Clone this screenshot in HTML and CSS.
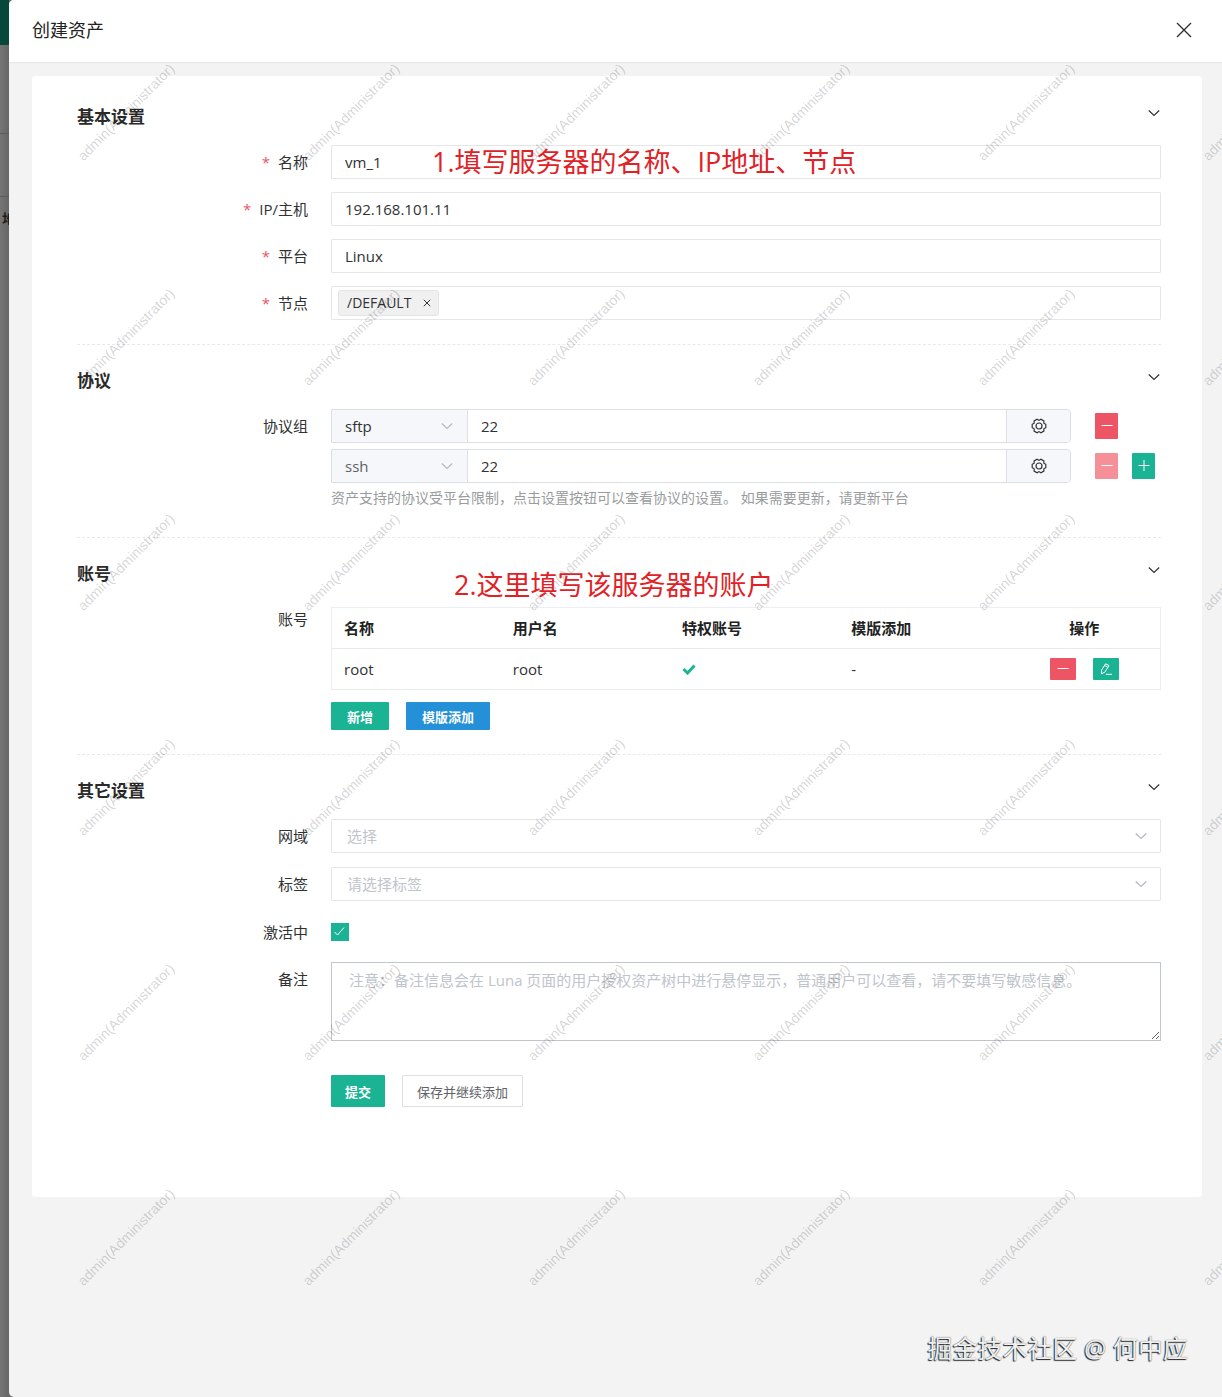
FILE: index.html
```html
<!DOCTYPE html>
<html lang="zh-CN">
<head>
  <meta charset="UTF-8">
  <title>创建资产</title>
  <link rel="stylesheet" href="styles.css">
</head>
<body>

  <svg class="sprite" aria-hidden="true">
    <symbol id="chevron" viewBox="0 0 12 12">
      <path d="M0.8 3.5 L6 8.5 L11.2 3.5" />
    </symbol>
    <symbol id="gear" viewBox="0 0 16 16">
      <path d="M14.8 6.3 V9.7 L12.85 10.8 L12.86 13.04 L9.93 14.73 L8 13.6 L6.07 14.73 L3.14 13.04 L3.15 10.8 L1.2 9.7 V6.3 L3.15 5.2 L3.14 2.96 L6.07 1.27 L8 2.4 L9.93 1.27 L12.86 2.96 L12.85 5.2 Z" />
      <circle cx="8" cy="8" r="3" />
    </symbol>
    <symbol id="minus" viewBox="0 0 12 12">
      <path d="M0.5 5.5 H11.5" />
    </symbol>
    <symbol id="plus" viewBox="0 0 12 12">
      <path d="M0.5 5.5 H11.5 M6 0 V11" />
    </symbol>
    <symbol id="pen" viewBox="0 0 12 12">
      <path d="M5.6 0.8 L9 2.6 L4.8 9.2 L1.6 10.8 L1.5 7.2 Z M4.6 2.4 L7.9 4.4 M6 11.3 H12" />
    </symbol>
  </svg>

  <div class="app">
    <div class="backdrop">
      <div class="backdrop-nav"></div>
      <div class="backdrop-bar"></div>
      <div class="backdrop-bar"></div>
      <div class="backdrop-text">地址</div>
    </div>

    <div class="drawer">
      <header class="drawer-header">
        <h1>创建资产</h1>
        <button type="button" class="close" aria-label="关闭">
          <svg viewBox="0 0 16 16"><path d="M1 1 L15 15 M15 1 L1 15" /></svg>
        </button>
      </header>

      <main class="drawer-body">
        <form class="panel">

          <section class="section">
            <div class="section-head">
              <h2>基本设置</h2>
              <button type="button" class="fold" aria-label="折叠"><svg class="chevron"><use href="#chevron" /></svg></button>
            </div>
            <div class="row">
              <label class="required" for="name">名称</label>
              <div class="field">
                <input class="control" type="text" id="name" value="vm_1">
                <div class="note note-name">1.填写服务器的名称、IP地址、节点</div>
              </div>
            </div>
            <div class="row">
              <label class="required" for="host">IP/主机</label>
              <div class="field"><input class="control" type="text" id="host" value="192.168.101.11"></div>
            </div>
            <div class="row">
              <label class="required" for="platform">平台</label>
              <div class="field"><input class="control" type="text" id="platform" value="Linux"></div>
            </div>
            <div class="row">
              <label class="required" for="node">节点</label>
              <div class="field control tags">
                <span class="tag">/DEFAULT
                  <button type="button" aria-label="移除"><svg viewBox="0 0 8 8"><path d="M0.8 0.8 L7.2 7.2 M7.2 0.8 L0.8 7.2" /></svg></button>
                </span>
                <input type="text" id="node">
              </div>
            </div>
          </section>

          <section class="section">
            <div class="section-head">
              <h2>协议</h2>
              <button type="button" class="fold" aria-label="折叠"><svg class="chevron"><use href="#chevron" /></svg></button>
            </div>
            <div class="row">
              <label for="protocol1">协议组</label>
              <div class="field protocols">
                <div class="protocol">
                  <div class="group">
                    <div class="select">
                      <select id="protocol1"><option>sftp</option></select>
                      <svg class="chevron"><use href="#chevron" /></svg>
                    </div>
                    <input type="text" value="22" aria-label="sftp 端口">
                    <button type="button" class="setting" aria-label="设置"><svg><use href="#gear" /></svg></button>
                  </div>
                  <div class="actions">
                    <button type="button" class="mini danger" aria-label="删除"><svg><use href="#minus" /></svg></button>
                  </div>
                </div>
                <div class="protocol">
                  <div class="group">
                    <div class="select">
                      <select aria-label="协议" disabled><option>ssh</option></select>
                      <svg class="chevron"><use href="#chevron" /></svg>
                    </div>
                    <input type="text" value="22" aria-label="ssh 端口">
                    <button type="button" class="setting" aria-label="设置"><svg><use href="#gear" /></svg></button>
                  </div>
                  <div class="actions">
                    <button type="button" class="mini danger" aria-label="删除" disabled><svg><use href="#minus" /></svg></button>
                    <button type="button" class="mini primary" aria-label="添加"><svg><use href="#plus" /></svg></button>
                  </div>
                </div>
                <p class="help">资产支持的协议受平台限制，点击设置按钮可以查看协议的设置。 如果需要更新，请更新平台</p>
              </div>
            </div>
          </section>

          <section class="section">
            <div class="section-head">
              <h2>账号</h2>
              <button type="button" class="fold" aria-label="折叠"><svg class="chevron"><use href="#chevron" /></svg></button>
            </div>
            <div class="row">
              <span class="label" id="accounts-label">账号</span>
              <div class="field accounts">
                <div class="note note-account">2.这里填写该服务器的账户</div>
                <table aria-labelledby="accounts-label">
                  <thead>
                    <tr>
                      <th>名称</th>
                      <th>用户名</th>
                      <th>特权账号</th>
                      <th>模版添加</th>
                      <th class="ops">操作</th>
                    </tr>
                  </thead>
                  <tbody>
                    <tr>
                      <td>root</td>
                      <td>root</td>
                      <td><svg class="yes" viewBox="0 0 14 12"><path d="M1.5 6 L5.5 10 L12.5 2.5" /></svg></td>
                      <td>-</td>
                      <td class="ops">
                        <div class="ops-buttons">
                          <button type="button" class="mini wide danger" aria-label="删除"><svg><use href="#minus" /></svg></button>
                          <button type="button" class="mini wide primary" aria-label="编辑"><svg><use href="#pen" /></svg></button>
                        </div>
                      </td>
                    </tr>
                  </tbody>
                </table>
                <div class="buttons">
                  <button type="button" class="btn small primary">新增</button>
                  <button type="button" class="btn small info">模版添加</button>
                </div>
              </div>
            </div>
          </section>

          <section class="section">
            <div class="section-head">
              <h2>其它设置</h2>
              <button type="button" class="fold" aria-label="折叠"><svg class="chevron"><use href="#chevron" /></svg></button>
            </div>
            <div class="row">
              <label for="domain">网域</label>
              <div class="field select">
                <select class="control empty" id="domain"><option>选择</option></select>
                <svg class="chevron"><use href="#chevron" /></svg>
              </div>
            </div>
            <div class="row roomy">
              <label for="labels">标签</label>
              <div class="field select">
                <select class="control empty" id="labels"><option>请选择标签</option></select>
                <svg class="chevron"><use href="#chevron" /></svg>
              </div>
            </div>
            <div class="row roomy">
              <label for="active">激活中</label>
              <div class="field check">
                <input type="checkbox" id="active" checked>
                <svg viewBox="0 0 18 18"><path d="M3.5 9 L6.5 12 L13 4.5" /></svg>
              </div>
            </div>
            <div class="row">
              <label for="comment">备注</label>
              <div class="field">
                <textarea id="comment" placeholder="注意：备注信息会在 Luna 页面的用户授权资产树中进行悬停显示，普通用户可以查看，请不要填写敏感信息。"></textarea>
              </div>
            </div>
            <div class="row submit-row">
              <div class="field buttons">
                <button type="submit" class="btn primary">提交</button>
                <button type="button" class="btn plain">保存并继续添加</button>
              </div>
            </div>
          </section>

        </form>
        <div class="watermark" id="watermark" aria-hidden="true"></div>
      </main>

      <div class="signature">掘金技术社区 @ 何中应</div>
    </div>
  </div>

  <script>
    const watermark = document.getElementById('watermark');
    const cell = 225;
    const cols = Math.ceil(watermark.clientWidth / cell);
    const rows = Math.ceil(watermark.clientHeight / cell);

    watermark.style.gridTemplateColumns = `repeat(${cols}, ${cell}px)`;

    for (let i = 0; i < cols * rows; i++) {
      const span = document.createElement('span');
      span.textContent = 'admin(Administrator)';
      watermark.appendChild(span);
    }
  </script>

</body>
</html>
```
FILE: styles.css
```css
* {
  box-sizing: border-box;
}

body {
  margin: 0;
  font-family: "Open Sans", "Noto Sans CJK SC", sans-serif;
  font-size: 15px;
  line-height: 20px;
  color: #303133;
  background-color: #6b6b6b;
}

h1, h2, p {
  margin: 0;
}

button, input, select, textarea {
  font-family: inherit;
  font-size: inherit;
  color: inherit;
  margin: 0;
}

button {
  display: flex;
  align-items: center;
  justify-content: center;
  padding: 0;
  border: none;
  background: none;
  cursor: pointer;
}

svg {
  fill: none;
  stroke: currentColor;
}

.sprite {
  position: absolute;
  width: 0;
  height: 0;
}

.app {
  display: flex;
  min-height: 100vh;
}

/* page behind the drawer */
.backdrop {
  width: 9px;
  overflow: hidden;
  background: linear-gradient(to right, #757575, #666);
}

.backdrop-nav {
  height: 45px;
  background-color: #06493b;
}

.backdrop-bar {
  height: 89px;
  border-bottom: 1px solid #5c5c5c;
}

.backdrop-bar + .backdrop-bar {
  height: 63px;
}

.backdrop-text {
  padding: 12px 0 0 2px;
  font-size: 14px;
  font-weight: bold;
  white-space: nowrap;
  color: #1c1c1c;
}

/* drawer */
.drawer {
  flex: 1;
  min-width: 0;
  display: flex;
  flex-direction: column;
  position: relative;
  overflow: hidden;
  border-radius: 5px 0 0 5px;
  background-color: #f3f3f3;
}

.drawer-header {
  display: flex;
  align-items: center;
  justify-content: space-between;
  height: 62px;
  padding: 0 30px 2px 23px;
  background-color: #fff;
  box-shadow: 0 1px 1px #e8e8e8;
}

.drawer-header h1 {
  font-size: 18px;
  font-weight: 400;
  color: #222;
}

.close svg {
  width: 16px;
  height: 16px;
  stroke-width: 1.4;
}

.drawer-body {
  flex: 1;
  position: relative;
  padding: 14px 20px 14px 23px;
}

.panel {
  padding: 5px 41px 66px 45px;
  border-radius: 3px;
  background-color: #fff;
}

/* sections */
.section {
  padding: 23px 0 24px;
}

.section + .section {
  border-top: 1px dashed #e7eaec;
}

.section-head {
  display: flex;
  align-items: flex-start;
  justify-content: space-between;
  margin-bottom: 15px;
}

.section-head h2 {
  font-size: 17px;
  line-height: 26px;
  color: #2a2a2a;
}

.fold {
  height: 18px;
  padding-right: 1px;
}

.chevron {
  width: 12px;
  height: 12px;
  stroke-width: 1.2;
}

.row {
  display: grid;
  grid-template-columns: 231px 1fr;
  column-gap: 23px;
}

.row + .row {
  margin-top: 13px;
}

.row + .roomy {
  margin-top: 14px;
}

.row > label, .label {
  line-height: 34px;
  text-align: right;
}

.required::before {
  content: "*";
  margin-right: 8px;
  color: #ed5565;
}

.field {
  position: relative;
  min-width: 0;
}

.control {
  display: block;
  width: 100%;
  height: 34px;
  padding: 0 13px;
  border: 1px solid #e5e6e7;
  border-radius: 1px;
  background-color: #fff;
  outline: none;
}

.note {
  position: absolute;
  font-size: 27px;
  line-height: 34px;
  white-space: nowrap;
  color: #e02227;
  pointer-events: none;
  z-index: 2;
}

.note-name {
  top: 0;
  left: 101px;
}

.note-account {
  top: -34px;
  left: 123px;
}

/* node tags */
.tags {
  display: flex;
  align-items: center;
  padding: 0 6px;
}

.tags input {
  flex: 1;
  min-width: 0;
  border: none;
  outline: none;
}

.tag {
  display: flex;
  align-items: center;
  gap: 12px;
  height: 26px;
  padding: 0 7px 0 8px;
  border: 1px solid #e4e4e4;
  border-radius: 3px;
  background-color: #f0f0f0;
  font-size: 14px;
}

.tag svg {
  width: 8px;
  height: 8px;
}

/* selects */
.select {
  display: grid;
  align-items: center;
}

.select select, .select .chevron {
  grid-area: 1 / 1;
}

.select select {
  appearance: none;
  outline: none;
  opacity: 1;
}

.select .chevron {
  justify-self: end;
  margin-right: 14px;
  color: #b4b8c0;
  pointer-events: none;
}

.empty {
  padding: 0 15px;
  color: #c0c4cc;
}

/* protocols */
.protocols {
  display: flex;
  flex-direction: column;
}

.protocol {
  display: grid;
  grid-template-columns: 1fr 66px;
  column-gap: 24px;
  align-items: center;
}

.protocol + .protocol {
  margin-top: 6px;
}

.group {
  display: grid;
  grid-template-columns: 136px 1fr 64px;
  height: 34px;
  border: 1px solid #dcdfe6;
  border-radius: 0 4px 4px 0;
  overflow: hidden;
}

.group .select {
  border-right: 1px solid #dcdfe6;
  background-color: #f5f7fa;
}

.group select {
  padding: 0 13px;
  border: none;
  background: none;
}

.group select:disabled {
  color: #606266;
}

.group input {
  min-width: 0;
  padding: 0 13px;
  border: none;
  outline: none;
}

.setting {
  border-left: 1px solid #dcdfe6;
  background-color: #f5f7fa;
}

.setting svg {
  width: 16px;
  height: 16px;
  stroke-width: 1.2;
}

.actions {
  display: flex;
  gap: 14px;
}

.help {
  font-size: 14px;
  line-height: 30px;
  color: #999c9e;
}

/* buttons */
.mini {
  width: 23px;
  height: 26px;
  border-radius: 1px;
  color: #fff;
}

.mini svg {
  width: 12px;
  height: 12px;
}

.mini.wide {
  width: 26px;
  height: 22px;
}

.primary {
  background-color: #1ab394;
  color: #fff;
}

.danger {
  background-color: #ed5565;
}

.danger:disabled {
  background-color: #f58f98;
}

.info {
  background-color: #2490d8;
  color: #fff;
}

.buttons {
  display: flex;
  gap: 17px;
}

.btn {
  height: 32px;
  padding: 0 14px;
  border-radius: 1px;
  font-size: 13px;
  font-weight: 600;
}

.btn.small {
  height: 28px;
  padding: 0 16px;
}

.btn.plain {
  border: 1px solid #dcdfe6;
  background-color: #fff;
  font-weight: 400;
  color: #606266;
}

/* accounts */
.accounts table {
  width: 100%;
  margin: 5px 0 12px;
  border: 1px solid #ebeef5;
  border-collapse: collapse;
  table-layout: fixed;
}

th, td {
  height: 41px;
  padding: 0 12px;
  border-bottom: 1px solid #e7eaec;
  text-align: left;
}

th {
  color: #222;
}

.ops {
  width: 152px;
  text-align: center;
}

.ops-buttons {
  display: flex;
  justify-content: center;
  gap: 17px;
}

.yes {
  display: block;
  width: 14px;
  height: 12px;
  color: #1ab394;
  stroke-width: 3;
}

/* checkbox and comment */
.check {
  display: grid;
  align-items: center;
  grid-template-columns: 18px;
}

.check input, .check svg {
  grid-area: 1 / 1;
  width: 18px;
  height: 18px;
}

.check input {
  appearance: none;
  border: 1px solid #1ab394;
}

.check input:checked {
  background-color: #1ab394;
}

.check svg {
  color: #fff;
  pointer-events: none;
}

textarea {
  display: block;
  width: 100%;
  height: 79px;
  padding: 5px 17px;
  border: 1px solid #c0c4cc;
  line-height: 24px;
  resize: vertical;
  outline: none;
}

textarea::placeholder {
  color: #c0c4cc;
}

.row.submit-row {
  margin-top: 34px;
}

.submit-row .field {
  grid-column: 2;
}

/* repeated user name over the body */
.watermark {
  position: absolute;
  inset: 0;
  display: grid;
  grid-auto-rows: 225px;
  overflow: hidden;
  pointer-events: none;
  font-family: "Liberation Sans", sans-serif;
  font-size: 14px;
  color: rgba(0, 0, 0, 0.18);
}

.watermark span {
  justify-self: start;
  align-self: start;
  margin: 40px 0 0 52px;
  white-space: nowrap;
  transform: rotate(-45deg);
}

.signature {
  position: absolute;
  right: 34px;
  bottom: 31px;
  font-size: 25px;
  line-height: 36px;
  color: #f0f0f0;
  text-shadow: -1px 1px 1px #222, 0 0 1px #444;
}
```
